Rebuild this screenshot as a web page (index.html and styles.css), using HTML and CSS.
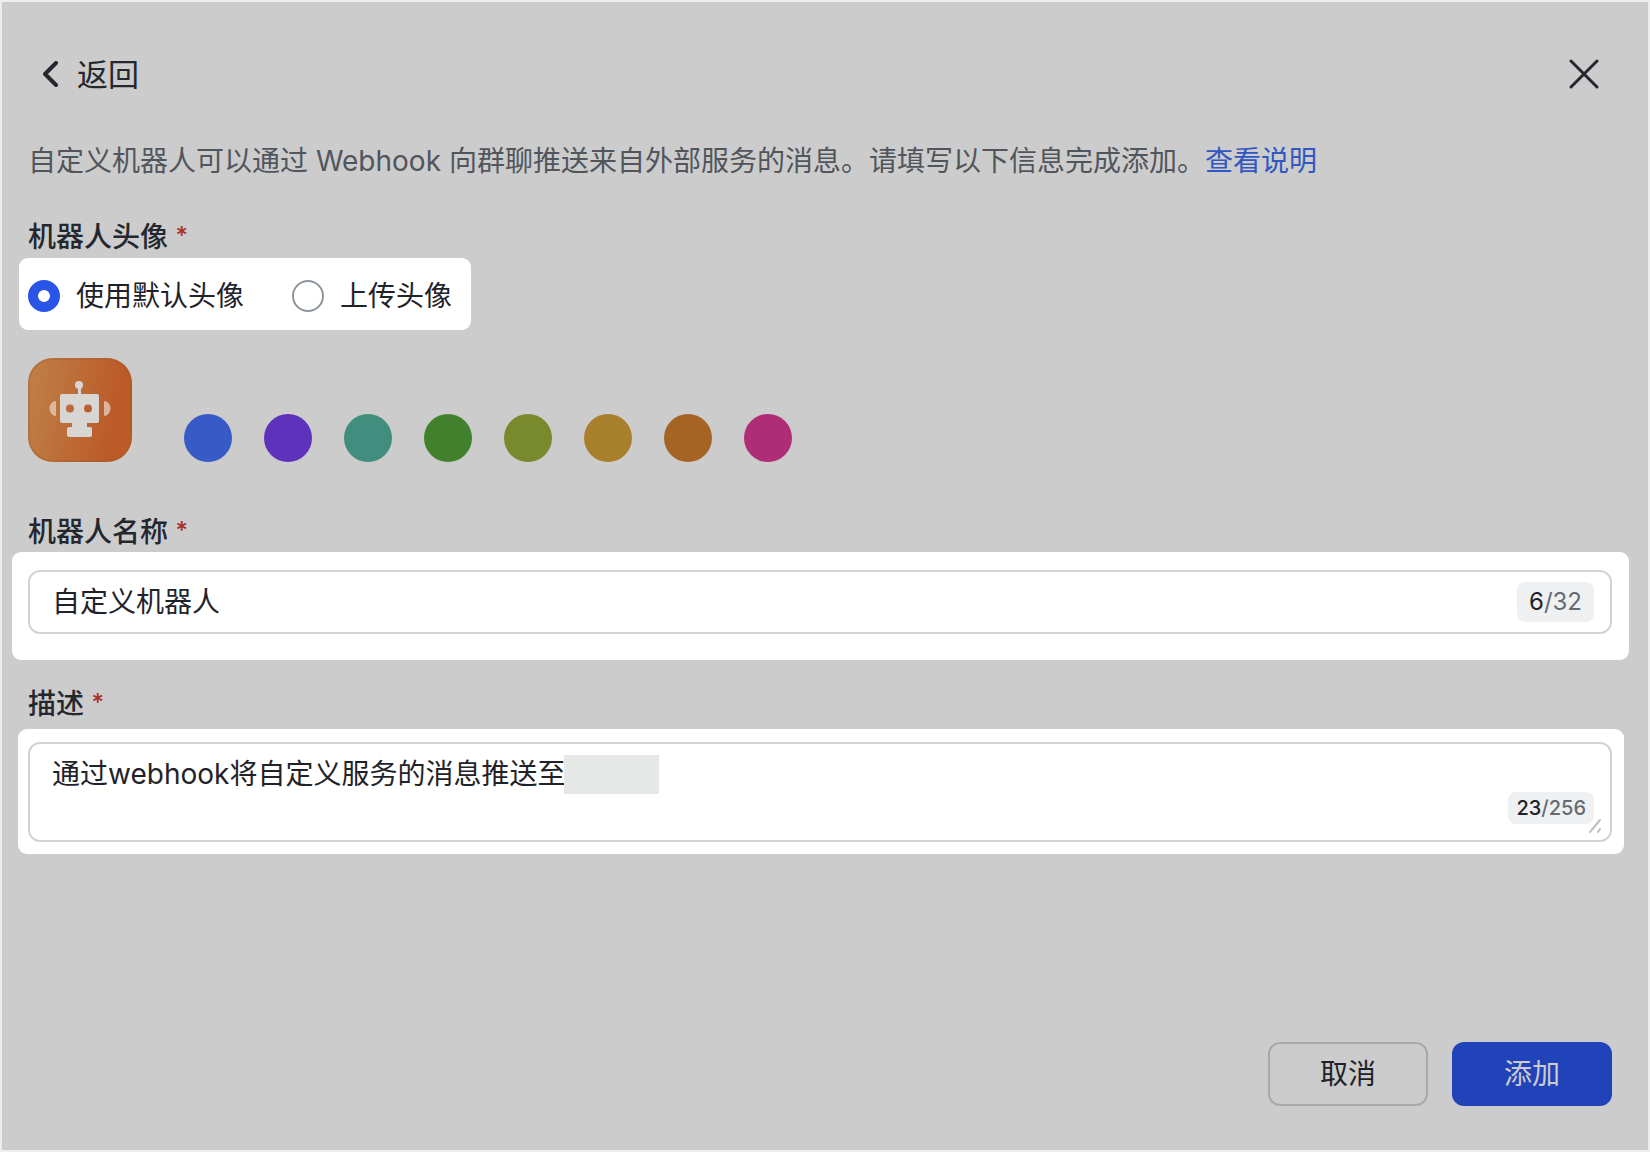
FILE: index.html
```html
<!DOCTYPE html>
<html lang="zh-CN">
<head>
    <meta charset="UTF-8">
    <meta name="viewport" content="width=device-width, initial-scale=1.0">
    <title>自定义机器人</title>
    <link rel="stylesheet" href="styles.css">
</head>
<body>
    <main class="dialog">
        <header class="dialog-header">
            <button type="button" class="back">
                <svg width="16" height="28" viewBox="0 0 16 28" aria-hidden="true">
                    <path d="M13 2 L2 13 L13 24" />
                </svg>
                返回
            </button>
            <button type="button" class="close" aria-label="关闭">
                <svg width="32" height="32" viewBox="0 0 32 32" aria-hidden="true">
                    <path d="M3 2 L29 28 M29 2 L3 28" />
                </svg>
            </button>
        </header>

        <form class="bot-form">
            <p class="intro">自定义机器人可以通过 Webhook 向群聊推送来自外部服务的消息。请填写以下信息完成添加。<a href="#">查看说明</a></p>

            <fieldset class="field">
                <legend class="label">机器人头像 <span class="required">*</span></legend>
                <div class="highlight radio-group">
                    <label class="radio"><input type="radio" name="avatar" value="default" checked>使用默认头像</label>
                    <label class="radio"><input type="radio" name="avatar" value="upload">上传头像</label>
                </div>
            </fieldset>

            <div class="avatar-row">
                <svg class="avatar" viewBox="0 0 104 104" role="img" aria-label="机器人">
                    <defs>
                        <linearGradient id="avatarBg" x1="0" y1="0" x2="1" y2="0.2">
                            <stop offset="0" stop-color="#c08149" />
                            <stop offset="0.9" stop-color="#bb5b28" />
                        </linearGradient>
                    </defs>
                    <rect width="104" height="104" rx="25" fill="url(#avatarBg)" />
                    <rect x="1" y="1" width="102" height="102" rx="24" fill="none" stroke="#a35a28" stroke-opacity="0.3" stroke-width="2" />
                    <path d="M28 43 A6.5 7.5 0 0 0 28 58 Z" fill="#dcbb9c" />
                    <path d="M76 43 A6.5 7.5 0 0 1 76 58 Z" fill="#dbb39f" />
                    <g fill="#d8d6d3">
                        <circle cx="51" cy="27" r="4" />
                        <rect x="50" y="29" width="3" height="9" />
                        <path d="M34 36 H69 Q71 36 71 38 V63 Q71 65 69 65 H59 V69 H62 Q64 69 64 71 V77 Q64 79 62 79 H41 Q39 79 39 77 V71 Q39 69 41 69 H44 V65 H34 Q32 65 32 63 V38 Q32 36 34 36 Z" />
                    </g>
                    <circle cx="42" cy="50.5" r="4" fill="#bb6b3b" />
                    <circle cx="60" cy="50.5" r="4" fill="#bb6031" />
                </svg>
                <div class="swatches">
                    <button type="button" class="swatch blue" aria-label="蓝色"></button>
                    <button type="button" class="swatch purple" aria-label="紫色"></button>
                    <button type="button" class="swatch teal" aria-label="青色"></button>
                    <button type="button" class="swatch green" aria-label="绿色"></button>
                    <button type="button" class="swatch olive" aria-label="橄榄色"></button>
                    <button type="button" class="swatch gold" aria-label="金色"></button>
                    <button type="button" class="swatch orange" aria-label="橙色"></button>
                    <button type="button" class="swatch pink" aria-label="粉色"></button>
                </div>
            </div>

            <div class="field">
                <label class="label" for="botName">机器人名称 <span class="required">*</span></label>
                <div class="highlight name-highlight">
                    <div class="input-box">
                        <input type="text" id="botName" maxlength="32" value="自定义机器人">
                        <span class="counter"><b>6</b>/32</span>
                    </div>
                </div>
            </div>

            <div class="field">
                <label class="label" for="botDesc">描述 <span class="required">*</span></label>
                <div class="highlight desc-highlight">
                    <div class="textarea-box">
                        <textarea id="botDesc" maxlength="256">通过webhook将自定义服务的消息推送至</textarea>
                        <span class="mask"></span>
                        <span class="counter counter-small"><b>23</b>/256</span>
                        <svg class="grip" width="14" height="16" viewBox="0 0 14 16" aria-hidden="true">
                            <path d="M2 14 L12 2 M10 14 L12 11" />
                        </svg>
                    </div>
                </div>
            </div>

            <footer class="actions">
                <button type="button" class="btn">取消</button>
                <button type="submit" class="btn btn-primary">添加</button>
            </footer>
        </form>
    </main>
</body>
</html>
```

FILE: styles.css
```css
* {
    margin: 0;
    padding: 0;
    box-sizing: border-box;
}

body,
button,
input,
textarea {
    font-family: Inter, "Noto Sans CJK SC", sans-serif;
    font-size: 28px;
    line-height: 40px;
    color: #1f2329;
}

button {
    border: none;
    background: none;
    cursor: pointer;
}

.dialog {
    display: flex;
    flex-direction: column;
    min-height: 100vh;
    padding: 47px 36px 44px 26px;
    border: 2px solid #ededed;
    background: #cccccc;
}

.dialog-header {
    display: flex;
    justify-content: space-between;
    align-items: center;
    padding: 0 12px 0 15px;
    margin-bottom: 40px;
}

.dialog-header svg,
.grip {
    display: block;
    fill: none;
    stroke: #24272d;
    stroke-width: 3;
    stroke-linecap: round;
    stroke-linejoin: round;
}

.back {
    display: flex;
    align-items: center;
    gap: 18px;
    font-size: 31px;
    line-height: 52px;
    color: #24272d;
}

.dialog-header .back svg {
    stroke-width: 4;
}

.bot-form {
    flex: 1;
    display: flex;
    flex-direction: column;
}

.intro {
    margin-bottom: 36px;
    color: #51555c;
}

.intro a {
    color: #3157c2;
    text-decoration: none;
}

.field {
    border: none;
}

.label {
    display: block;
    font-weight: 500;
    color: #24272d;
}

.required {
    font-size: 24px;
    line-height: 24px;
    vertical-align: 3px;
    color: #ac2f28;
}

.highlight {
    border-radius: 9px;
    background: #ffffff;
}

.radio-group {
    display: flex;
    gap: 48px;
    width: fit-content;
    margin: 1px 0 0 -9px;
    padding: 18px 19px 14px 9px;
}

.radio {
    display: flex;
    align-items: center;
    gap: 16px;
    cursor: pointer;
}

.radio input {
    appearance: none;
    width: 32px;
    height: 32px;
    border: 2px solid #8f959e;
    border-radius: 50%;
    background: #ffffff;
}

.radio input:checked {
    border: 10px solid #2955e7;
}

.avatar-row {
    display: flex;
    align-items: flex-end;
    gap: 52px;
    margin: 28px 0 50px;
}

.avatar {
    width: 104px;
    height: 104px;
}

.swatches {
    display: flex;
    gap: 32px;
}

.swatch {
    width: 48px;
    height: 48px;
    border-radius: 50%;
}

.blue { background: #375ac7; }
.purple { background: #5e32bb; }
.teal { background: #428e7e; }
.green { background: #41802c; }
.olive { background: #788a2b; }
.gold { background: #a87f2a; }
.orange { background: #a56423; }
.pink { background: #af2d76; }

.name-highlight {
    margin: 0 -17px 24px -16px;
    padding: 18px 17px 26px 16px;
}

.input-box {
    display: flex;
    align-items: center;
    height: 64px;
    padding: 0 16px 0 22px;
    border: 2px solid #d0d3d8;
    border-radius: 12px;
}

.input-box input {
    flex: 1;
    min-width: 0;
    border: none;
    outline: none;
    background: none;
}

.counter {
    padding: 0 12px;
    border-radius: 8px;
    background: #eff0f1;
    font-size: 24px;
    color: #646a73;
}

.counter b {
    font-weight: 400;
    color: #1f2329;
}

.desc-highlight {
    margin: 5px -12px 0 -10px;
    padding: 13px 12px 12px 10px;
}

.textarea-box {
    position: relative;
}

.textarea-box textarea {
    display: block;
    width: 100%;
    height: 100px;
    padding: 10px 22px;
    border: 2px solid #d0d3d8;
    border-radius: 12px;
    outline: none;
    resize: none;
    background: none;
}

/* grey block that hides the group name after the text */
.mask {
    position: absolute;
    top: 13px;
    left: 536px;
    width: 95px;
    height: 39px;
    background: #e6e7e7;
}

.counter-small {
    position: absolute;
    right: 18px;
    bottom: 18px;
    padding: 0 8px;
    font-size: 20px;
    line-height: 32px;
}

.counter-small,
.counter-small b {
    font-weight: 500;
}

.grip {
    position: absolute;
    right: 10px;
    bottom: 8px;
    stroke: #bbbfc4;
    stroke-width: 2;
}

.actions {
    display: flex;
    justify-content: flex-end;
    gap: 24px;
    margin-top: auto;
}

.btn {
    width: 160px;
    height: 64px;
    border: 2px solid #a8a9aa;
    border-radius: 12px;
}

.btn-primary {
    border-color: #2143b9;
    background: #2143b9;
    color: #cccccc;
}
```
